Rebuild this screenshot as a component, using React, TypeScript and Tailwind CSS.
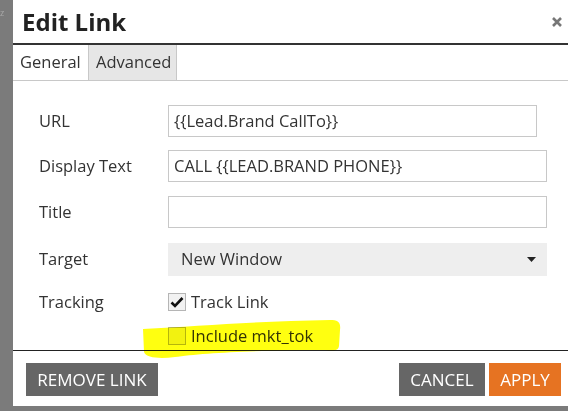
import React from "react";

const font = { fontFamily: '"Open Sans", "Liberation Sans", sans-serif' };

function Row({ label, className, children }: { label: string; className: string; children: React.ReactNode }) {
  return (
    <div className={"flex items-center " + className}>
      <div className="w-[129px] text-[16.5px] text-[#333]">{label}</div>
      {children}
    </div>
  );
}

function Checkbox({ checked }: { checked?: boolean }) {
  return (
    <div className="w-[18px] h-[18px] border border-[#b5b5b5] bg-[#f2f2f2] flex items-center justify-center">
      {checked && (
        <svg width="14" height="12" viewBox="0 0 14 12">
          <path d="M1.5 6.5 L5 10 L12.5 2" fill="none" stroke="#111" strokeWidth="2.6" />
        </svg>
      )}
    </div>
  );
}

export default function App() {
  return (
    <div className="relative w-[568px] h-[411px] bg-[#7b7b7b] overflow-hidden" style={font}>
      <div className="absolute left-0 top-[8px] text-[9px] text-[#aaa] leading-none">z</div>
      <div className="ml-[13px] w-[555px] h-[406px] bg-white flex flex-col">
        <div className="h-[45px] shrink-0 border-b-2 border-[#333] flex items-center justify-between pl-[9px] pr-[5px]">
          <div className="text-[24px] font-bold text-[#222] leading-none">Edit Link</div>
          <svg width="12" height="12" viewBox="0 0 12 12" className="mt-[1px]">
            <path d="M2 2 L10 10 M10 2 L2 10" stroke="#777" strokeWidth="2.6" />
          </svg>
        </div>
        <div className="h-[36px] shrink-0 border-b border-[#c8c8c8] flex text-[16.5px] text-[#333]">
          <div className="w-[75px] flex items-center pl-[7px]">General</div>
          <div className="w-[89px] flex items-center pl-[7px] bg-[#e6e6e6] border-l border-r border-[#c8c8c8]">
            Advanced
          </div>
        </div>
        <div className="pl-[26px] flex flex-col">
          <Row label="URL" className="mt-[24px]">
            <div className="w-[369px] h-[32px] border border-[#c8c8c8] flex items-center pl-[5px] text-[16.5px] text-[#333]">
              {"{{Lead.Brand CallTo}}"}
            </div>
          </Row>
          <Row label="Display Text" className="mt-[13px]">
            <div className="w-[379px] h-[32px] border border-[#c8c8c8] flex items-center pl-[5px] text-[16.5px] text-[#333]">
              {"CALL {{LEAD.BRAND PHONE}}"}
            </div>
          </Row>
          <Row label="Title" className="mt-[14px]">
            <div className="w-[379px] h-[32px] border border-[#c8c8c8]" />
          </Row>
          <Row label="Target" className="mt-[15px]">
            <div className="w-[379px] h-[33px] bg-[#eeeeee] flex items-center justify-between pl-[13px] pr-[11px] text-[16.5px] text-[#333]">
              <span>New Window</span>
              <svg width="9" height="5" viewBox="0 0 9 5">
                <path d="M0 0 H9 L4.5 5 Z" fill="#222" />
              </svg>
            </div>
          </Row>
        </div>
        <div className="pl-[26px] mt-[17px] h-[18px] flex items-center leading-[18px]">
          <div className="w-[129px] text-[16.5px] text-[#333]">Tracking</div>
          <Checkbox checked />
          <span className="ml-[5px] text-[16.5px] text-[#333]">Track Link</span>
        </div>
        <div className="pl-[155px] mt-[16px] h-[18px] flex items-center leading-[18px]">
          <Checkbox />
          <span className="ml-[5px] text-[16.5px] text-[#333]">Include mkt_tok</span>
        </div>
        <div className="mt-[5px] border-t border-[#222]" />
        <div className="flex justify-between pl-[13px] pr-[7px] pt-[12px]">
          <div className="h-[33px] w-[132px] bg-[#666] text-white text-[17px] flex items-center justify-center">
            REMOVE LINK
          </div>
          <div className="flex gap-[4px]">
            <div className="h-[33px] w-[86px] bg-[#666] text-white text-[17px] flex items-center justify-center">
              CANCEL
            </div>
            <div className="h-[33px] w-[72px] bg-[#e67322] text-white text-[17px] flex items-center justify-center">
              APPLY
            </div>
          </div>
        </div>
      </div>
      <svg
        className="absolute left-0 top-0 pointer-events-none mix-blend-multiply"
        width="568"
        height="411"
        viewBox="0 0 568 411"
      >
        <path
          d="M143 329 C200 326 260 321 330 320 C338 320 341 322 340 330 L339 346 C338 351 334 351 325 350 C260 350 200 353 175 357 C160 359 146 358 144 352 Z"
          fill="#ffff10"
        />
      </svg>
    </div>
  );
}
